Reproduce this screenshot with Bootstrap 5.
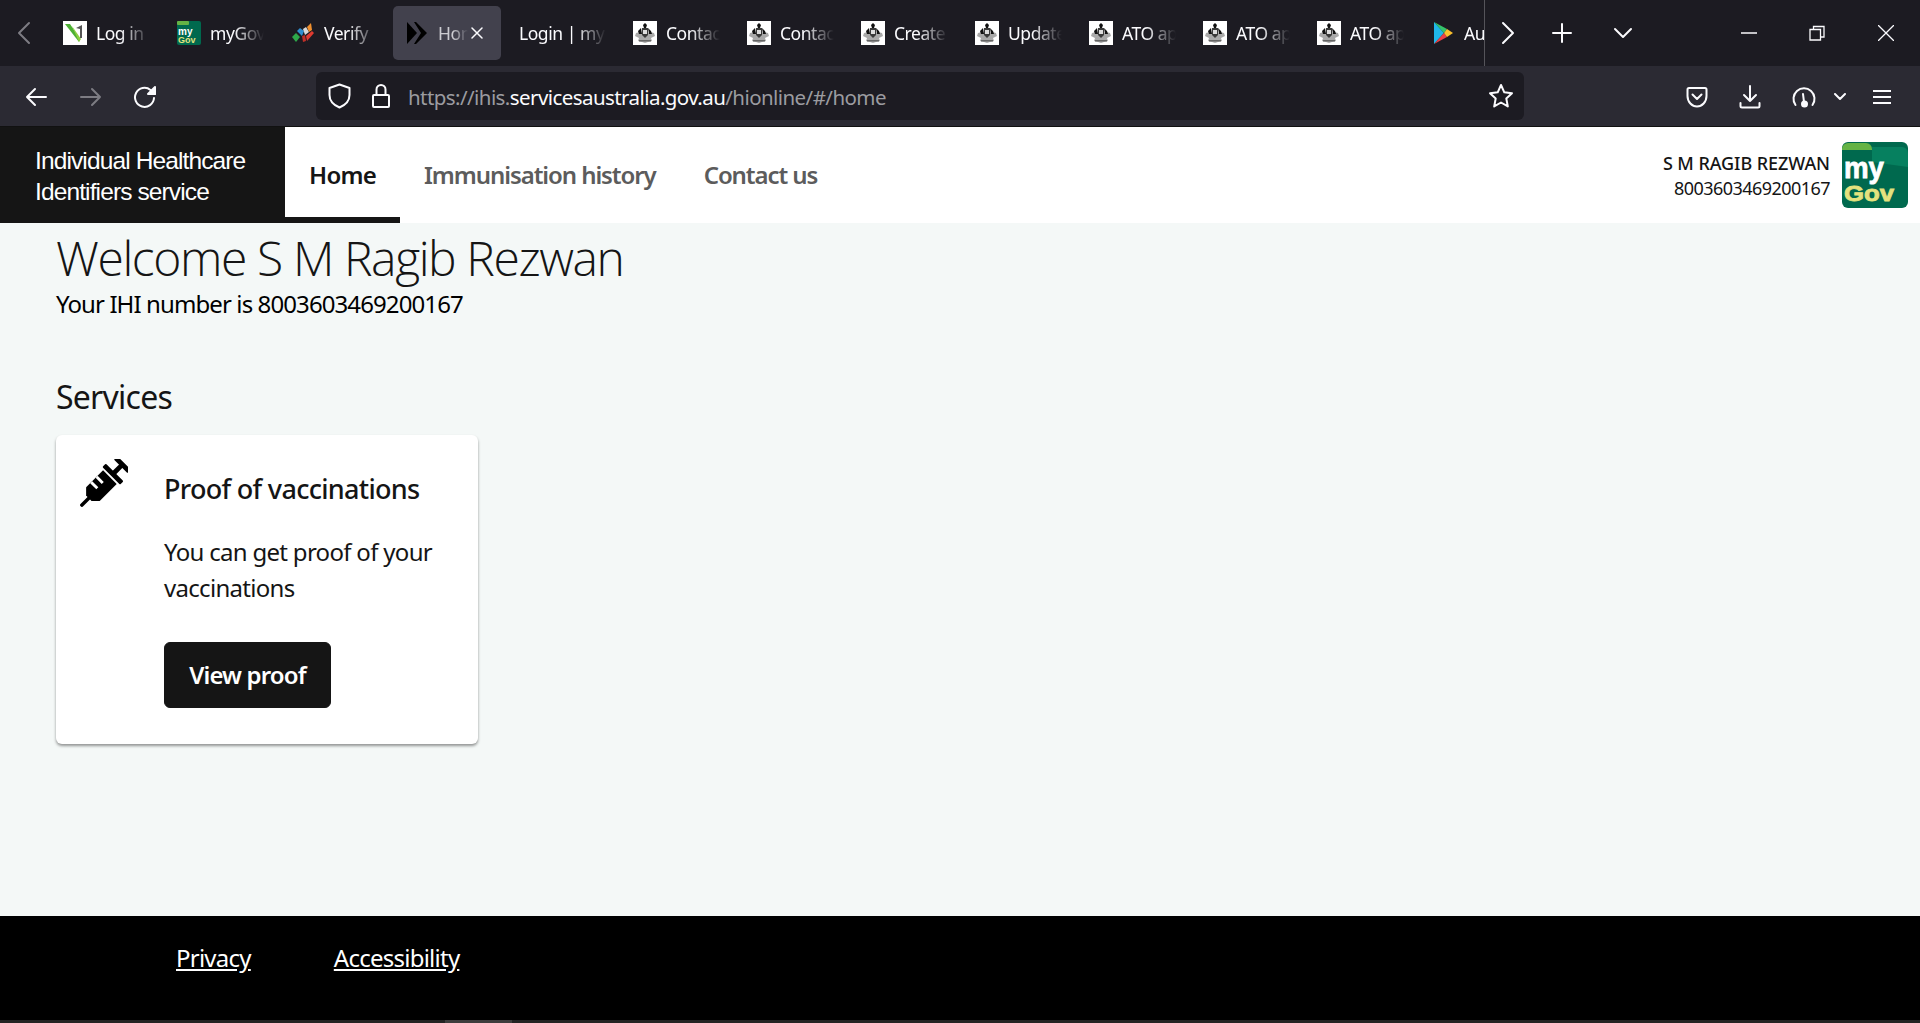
<!DOCTYPE html>
<html lang="en">
<head>
  <meta charset="UTF-8">
  <meta name="viewport" content="width=device-width, initial-scale=1.0">
  <title>Home - Individual Healthcare Identifiers service</title>
  <link rel="stylesheet" href="https://cdn.jsdelivr.net/npm/bootstrap@5.3.0/dist/css/bootstrap.min.css">
  <style>
    html, body { height: 100%; }
    body {
      font-family: "Noto Sans", "Open Sans", sans-serif;
      background-color: #f4f8f7;
      color: #151515;
      overflow: hidden;
    }
    .app-shell { height: 1023px; }

    /* browser chrome */
    .tab-strip { height: 66px; background: #1c1b22; color: #fbfbfe; }
    .tab-back { width: 48px; padding-left: 17px; }
    .tab-list { width: 1437px; height: 66px; overflow: hidden; border-right: 1px solid #55545a; }
    .tab-slot { flex: 0 0 114px; width: 114px; min-width: 0; height: 66px; padding: 6px 3px; }
    .tab-inner { height: 54px; padding: 0 9px 0 12px; gap: 9px; border-radius: 5px; position: relative; }
    .tab-inner.is-active { background: #42414d; padding-right: 33px; }
    .tab-label {
      font-size: 17.5px; letter-spacing: -.45px; white-space: nowrap; overflow: hidden; flex: 1 1 0; min-width: 0;
      -webkit-mask-image: linear-gradient(to right, #000 calc(100% - 30px), transparent);
      mask-image: linear-gradient(to right, #000 calc(100% - 30px), transparent);
    }
    .is-active .tab-label {
      -webkit-mask-image: linear-gradient(to right, rgba(0,0,0,.75) 50%, transparent);
      mask-image: linear-gradient(to right, rgba(0,0,0,.75) 50%, transparent);
    }
    .tab-close { position: absolute; left: 78px; top: 21px; }
    .tab-tools { flex: 1 1 auto; }
    .fav { width: 24px; height: 24px; flex: none; display: block; }
    .tool-row { height: 60px; background: #2b2a33; }
    .tool-row > svg { margin-top: 2px; }
    .url-bar {
      width: 1208px; height: 48px; margin-left: 159px; padding-left: 12px;
      background: #1c1b22; border-radius: 6px; color: #9b9ba0;
      font-size: 20.5px; letter-spacing: -.57px; white-space: nowrap;
    }
    .url-bar b { font-weight: 400; color: #fbfbfe; }
    .url-text { margin-left: 18px; padding-top: 2px; }
    .ico { stroke: #fbfbfe; fill: none; stroke-width: 2; stroke-linecap: round; stroke-linejoin: round; display: block; flex: none; }
    .ico.dim { stroke: #7d7c83; }
    .ico-next { margin-left: 16px; }
    .ico-plus { margin-left: 37px; }
    .ico-list { margin-left: 41px; }
    .ico-min { margin-left: 108px; }
    .ico-restore { margin-left: 52px; }
    .ico-x { margin-left: 53px; }
    .ico-back { margin-left: 25px; }
    .ico-fwd { margin-left: 33px; }
    .ico-reload { margin-left: 31px; }
    .ico-lock { margin-left: 21px; }
    .ico-star { margin-left: auto; margin-right: 10px; }
    .ico-pocket { margin-left: 162px; }
    .ico-dl { margin-left: 31px; }
    .ico-gauge { margin-left: 31px; }
    .ico-caret { margin-left: 18px; }
    .ico-menu { margin-left: 27px; }

    /* site header */
    .site-head { height: 97px; background: #fff; border-top: 1px solid #111; }
    .brand-box {
      width: 285px; padding: 1px 0 0 35px; background: #151515; color: #fff;
      font-family: "Liberation Sans", Arial, sans-serif; font-size: 24.5px; line-height: 31px; letter-spacing: -.88px;
    }
    .site-links .nav-link {
      height: 96px; padding: 0 24px; font-size: 24px; font-weight: 600; letter-spacing: -1.08px; color: #5c5c5c;
      display: flex; align-items: center;
    }
    .site-links .nav-link.active { color: #151515; letter-spacing: -.75px; border-bottom: 6px solid #151515; padding-top: 6px; }
    .user-box { padding-right: 12px; gap: 12px; }
    .user-id { padding-top: 2px; }
    .user-name { font-size: 18px; font-weight: 500; letter-spacing: -.07px; line-height: 25px; }
    .user-num { font-size: 18px; letter-spacing: -.55px; line-height: 25px; }

    /* content */
    .page-main { padding: 0 56px; }
    .page-title { font-family: "Open Sans", sans-serif; font-size: 48px; font-weight: 300; line-height: 60px; letter-spacing: -1.4px; margin: 0; padding-top: 5px; }
    .ihi-line { font-size: 24px; line-height: 32px; letter-spacing: -.9px; margin: 0 0 55px; color: #000; }
    .section-title { font-size: 32px; font-weight: 400; line-height: 44px; letter-spacing: -.75px; margin: 0 0 16px; }
    .service-card {
      width: 422px; height: 309px; border: 0; border-radius: 6px; background: #fff;
      box-shadow: 0 2px 3px rgba(0,0,0,.4);
    }
    .service-body { padding: 0; }
    .syringe { position: absolute; left: 24px; top: 24px; }
    .service-text { padding: 33px 0 0 108px; }
    .service-card h3 { font-size: 27px; font-weight: 500; line-height: 42px; letter-spacing: -.7px; margin: 0 0 24px; }
    .service-card p { font-size: 24px; line-height: 36px; letter-spacing: -.7px; margin: 0 0 36px; white-space: nowrap; }
    .proof-btn {
      width: 167px; height: 66px; padding: 0; background: #151515; border-color: #151515; color: #fff;
      font-size: 24px; font-weight: 600; letter-spacing: -.85px; border-radius: 6px; line-height: 63px;
    }
    .site-foot { height: 104px; background: #000; padding: 0 0 20px 176px; gap: 83px; }
    .site-foot a { color: #fff; font-size: 24px; letter-spacing: -.75px; }
    .bottom-strip { height: 3px; background: #232323; }
    .bottom-thumb { width: 67px; margin-left: 445px; background: #3d3d3d; }
  </style>
</head>
<body>
  <svg width="0" height="0" class="position-absolute">
    <symbol id="arms" viewBox="0 0 24 24">
      <rect width="24" height="24" fill="#fff"/>
      <path d="M3 12l4-1 2 1h6l2-1 4 1 1 3-4 2 1 3-4 1-3 1-3-1-4-1 1-3-4-2z" fill="#a9a9a9"/>
      <path d="M5 10l3-3 1 6H6zM10 4l2-2 2 2-1 3h-2zM15 7l3 3 1 3h-3z" fill="#111"/>
      <path d="M9 7h6v7l-3 3-3-3z" fill="#3a3a3a"/>
      <path d="M10 9h4v4h-4z" fill="#ddd"/>
      <path d="M6 19h12v1.500H6z" fill="#666"/>
    </symbol>
  </svg>
  <div class="app-shell d-flex flex-column">
    <div class="tab-strip d-flex align-items-center">
      <div class="tab-back">
        <svg class="ico dim" width="14" height="24" viewBox="0 0 14 24"><path d="M12 2L2 12l10 10"/></svg>
      </div>
      <div class="tab-list d-flex">
        <div class="tab-slot"><div class="tab-inner d-flex align-items-center">
          <svg class="fav" viewBox="0 0 24 24"><rect width="24" height="24" fill="#fff"/><path d="M2 3h5l10 15-1 3z" fill="#4cb034"/><path d="M9 5l9 13-2 3z" fill="#8ccf3f"/><path d="M13 7l6-3v13h-2V8z" fill="#555"/></svg>
          <span class="tab-label">Log in</span></div></div>
        <div class="tab-slot"><div class="tab-inner d-flex align-items-center">
          <svg class="fav" viewBox="0 0 24 24"><rect width="24" height="24" rx="2" fill="#00694e"/><rect width="12" height="4" rx="1" fill="#65b345"/><text x="1" y="14" font-family="Liberation Sans" font-weight="700" font-size="10" fill="#fff">my</text><text x="1" y="22" font-family="Liberation Sans" font-weight="700" font-size="9" fill="#e4e27e">Gov</text></svg>
          <span class="tab-label">myGov</span></div></div>
        <div class="tab-slot"><div class="tab-inner d-flex align-items-center">
          <svg class="fav" viewBox="0 0 24 24"><path d="M1 16l4-4 4 4-4 5z" fill="#2ea84a"/><path d="M6 10l3-3 4 3-2 5z" fill="#2f8fd0"/><path d="M12 8l3-2 3 5-4 3z" fill="#d9d9d9"/><path d="M16 6l4-4 1 7-3 2z" fill="#f0902e"/><path d="M15 15l6-5 2 2-7 8z" fill="#e03a30"/><path d="M11 15l3-1 1 6-3 1z" fill="#c03028"/></svg>
          <span class="tab-label">Verify</span></div></div>
        <div class="tab-slot"><div class="tab-inner is-active d-flex align-items-center">
          <svg class="fav" viewBox="0 0 24 24"><path d="M2 1l10 11L2 23z" fill="#000"/><path d="M9 1h2l11 11-11 11H9l7-11z" fill="#000"/></svg>
          <span class="tab-label">Home</span>
          <svg class="ico tab-close" width="12" height="12" viewBox="0 0 12 12"><path d="M1 1l10 10M11 1L1 11" stroke-width="1.500"/></svg>
        </div></div>
        <div class="tab-slot"><div class="tab-inner d-flex align-items-center">
          <span class="tab-label">Login | my</span></div></div>
        <div class="tab-slot"><div class="tab-inner d-flex align-items-center"><svg class="fav"><use href="#arms"/></svg><span class="tab-label">Contac</span></div></div>
        <div class="tab-slot"><div class="tab-inner d-flex align-items-center"><svg class="fav"><use href="#arms"/></svg><span class="tab-label">Contac</span></div></div>
        <div class="tab-slot"><div class="tab-inner d-flex align-items-center"><svg class="fav"><use href="#arms"/></svg><span class="tab-label">Create</span></div></div>
        <div class="tab-slot"><div class="tab-inner d-flex align-items-center"><svg class="fav"><use href="#arms"/></svg><span class="tab-label">Update</span></div></div>
        <div class="tab-slot"><div class="tab-inner d-flex align-items-center"><svg class="fav"><use href="#arms"/></svg><span class="tab-label">ATO ap</span></div></div>
        <div class="tab-slot"><div class="tab-inner d-flex align-items-center"><svg class="fav"><use href="#arms"/></svg><span class="tab-label">ATO ap</span></div></div>
        <div class="tab-slot"><div class="tab-inner d-flex align-items-center"><svg class="fav"><use href="#arms"/></svg><span class="tab-label">ATO ap</span></div></div>
        <div class="tab-slot"><div class="tab-inner d-flex align-items-center">
          <svg class="fav" viewBox="0 0 24 24"><path d="M3 1l10 11L3 23z" fill="#1fb6e8"/><path d="M3 1l13 7-3 4z" fill="#35c46b"/><path d="M3 23l13-7-3-4z" fill="#ec3f46"/><path d="M16 8l6 4-6 4-3-4z" fill="#fbc02d"/></svg>
          <span class="tab-label">Au</span></div></div>
      </div>
      <div class="tab-tools d-flex align-items-center">
        <svg class="ico ico-next" width="14" height="24" viewBox="0 0 14 24"><path d="M2 2l10 10L2 22"/></svg>
        <svg class="ico ico-plus" width="20" height="20" viewBox="0 0 20 20"><path d="M10 1v18M1 10h18"/></svg>
        <svg class="ico ico-list" width="20" height="12" viewBox="0 0 20 12"><path d="M2 2l8 8 8-8"/></svg>
        <svg class="ico ico-min" width="16" height="2" viewBox="0 0 16 2"><path d="M0 1h16" stroke-width="1.500"/></svg>
        <svg class="ico ico-restore" width="16" height="16" viewBox="0 0 16 16"><path d="M1 4.500h10.500V15H1zM4.500 4.500V1.500H15V12h-3.500" stroke-width="1.300" stroke-linecap="butt" stroke-linejoin="miter"/></svg>
        <svg class="ico ico-x" width="16" height="16" viewBox="0 0 16 16"><path d="M0 0l16 16M16 0L0 16" stroke-width="1.300"/></svg>
      </div>
    </div>

    <div class="tool-row d-flex align-items-center">
      <svg class="ico ico-back" width="22" height="20" viewBox="0 0 22 20"><path d="M21 10H2M10 2l-8 8 8 8"/></svg>
      <svg class="ico dim ico-fwd" width="22" height="20" viewBox="0 0 22 20"><path d="M1 10h19M12 2l8 8-8 8"/></svg>
      <svg class="ico ico-reload" width="24" height="24" viewBox="0 0 24 24"><path d="M21 13a9.500 9.500 0 1 1-3.500-8L22 9"/><path d="M22 2v7h-7z" fill="#fbfbfe"/></svg>
      <div class="url-bar d-flex align-items-center">
        <svg class="ico" width="23" height="26" viewBox="0 0 23 26"><path d="M11.500 1.500l10 3.500v7c0 6-4 10-10 12.500C5.500 22 1.500 18 1.500 12V5z"/></svg>
        <svg class="ico ico-lock" width="18" height="26" viewBox="0 0 18 26"><path d="M2 12h14a1 1 0 0 1 1 1v10a1 1 0 0 1-1 1H2a1 1 0 0 1-1-1V13a1 1 0 0 1 1-1zM4.500 12V6.500a4.500 4.500 0 0 1 9 0V12"/></svg>
        <span class="url-text">https://ihis.<b>servicesaustralia.gov.au</b>/hionline/#/home</span>
        <svg class="ico ico-star" width="26" height="26" viewBox="0 0 26 26"><path d="M13 2l3.300 7.300 7.700.9-5.700 5.300 1.500 7.900L13 19.500 6.200 23.400l1.500-7.900L2 10.200l7.700-.9z"/></svg>
      </div>
      <svg class="ico ico-pocket" width="22" height="22" viewBox="0 0 22 22"><path d="M3 2h16a1.500 1.500 0 0 1 1.500 1.500V10c0 6-4.500 10.500-9.500 10.500S1.500 16 1.500 10V3.500A1.500 1.500 0 0 1 3 2zM6.500 8.500l4.500 4.500 4.500-4.500"/></svg>
      <svg class="ico ico-dl" width="22" height="24" viewBox="0 0 22 24"><path d="M11 1v15M5 10l6 6 6-6M1.500 18v3a1.500 1.500 0 0 0 1.500 1.500h16a1.500 1.500 0 0 0 1.500-1.500v-3"/></svg>
      <svg class="ico ico-gauge" width="24" height="22" viewBox="0 0 24 22"><path d="M3.500 19A10.500 10.500 0 1 1 20.500 19"/><path d="M11 8l1 8"/><circle cx="12.500" cy="18" r="2.500" fill="#fbfbfe"/></svg>
      <svg class="ico ico-caret" width="12" height="8" viewBox="0 0 12 8"><path d="M1 1l5 5 5-5"/></svg>
      <svg class="ico ico-menu" width="18" height="16" viewBox="0 0 18 16"><path d="M0 2h18M0 8h18M0 14h18"/></svg>
    </div>

    <header class="site-head d-flex">
      <div class="brand-box d-flex align-items-center">Individual Healthcare<br>Identifiers service</div>
      <ul class="nav site-links">
        <li class="nav-item"><a class="nav-link active" href="#">Home</a></li>
        <li class="nav-item"><a class="nav-link" href="#">Immunisation history</a></li>
        <li class="nav-item"><a class="nav-link" href="#">Contact us</a></li>
      </ul>
      <div class="user-box ms-auto d-flex align-items-center">
        <div class="user-id text-end">
          <div class="user-name">S M RAGIB REZWAN</div>
          <div class="user-num">8003603469200167</div>
        </div>
        <svg width="66" height="66" viewBox="0 0 66 66">
          <rect width="66" height="66" rx="6" fill="#00694e"/>
          <path d="M30 5h30a6 6 0 0 1 6 6v14L30 20z" fill="#06805f"/>
          <path d="M0 7a6 6 0 0 1 6-6h18a6 6 0 0 1 6 6v1H0z" fill="#65b345"/>
          <text x="2" y="36" font-family="Liberation Sans, sans-serif" font-weight="700" font-size="29" textLength="40" lengthAdjust="spacingAndGlyphs" fill="#fff" stroke="#fff" stroke-width=".8">my</text>
          <text x="2" y="59" font-family="Liberation Sans, sans-serif" font-weight="700" font-size="22" textLength="50" lengthAdjust="spacingAndGlyphs" fill="#e4e27e" stroke="#e4e27e" stroke-width=".8">Gov</text>
        </svg>
      </div>
    </header>

    <main class="page-main flex-grow-1">
      <h1 class="page-title">Welcome S M Ragib Rezwan</h1>
      <p class="ihi-line">Your IHI number is 8003603469200167</p>
      <h2 class="section-title">Services</h2>
      <div class="card service-card">
        <div class="card-body service-body position-relative">
          <svg class="syringe" width="48" height="48" viewBox="0 0 50 50">
            <g transform="translate(0 50) rotate(-45)">
              <rect x="1" y="-1.800" width="16" height="3.600" rx="1.500" fill="#000"/>
              <path d="M13-4l6-6h25v20H19l-6-6z" fill="#000"/>
              <path d="M25-10h3v9h-3zM33-10h3v9h-3z" fill="#fff"/>
              <rect x="46" y="-13" width="5" height="26" rx="1" fill="#000"/>
              <rect x="50" y="-2.500" width="12" height="5" fill="#000"/>
              <rect x="60" y="-10" width="5" height="20" rx="1" fill="#000"/>
            </g>
          </svg>
          <div class="service-text">
            <h3>Proof of vaccinations</h3>
            <p>You can get proof of your<br>vaccinations</p>
            <a href="#" class="btn proof-btn">View proof</a>
          </div>
        </div>
      </div>
    </main>

    <footer class="site-foot d-flex align-items-center">
      <a href="#">Privacy</a>
      <a href="#">Accessibility</a>
    </footer>
    <div class="bottom-strip d-flex"><div class="bottom-thumb"></div></div>
  </div>
  <script src="https://cdn.jsdelivr.net/npm/bootstrap@5.3.0/dist/js/bootstrap.bundle.min.js"></script>
</body>
</html>
